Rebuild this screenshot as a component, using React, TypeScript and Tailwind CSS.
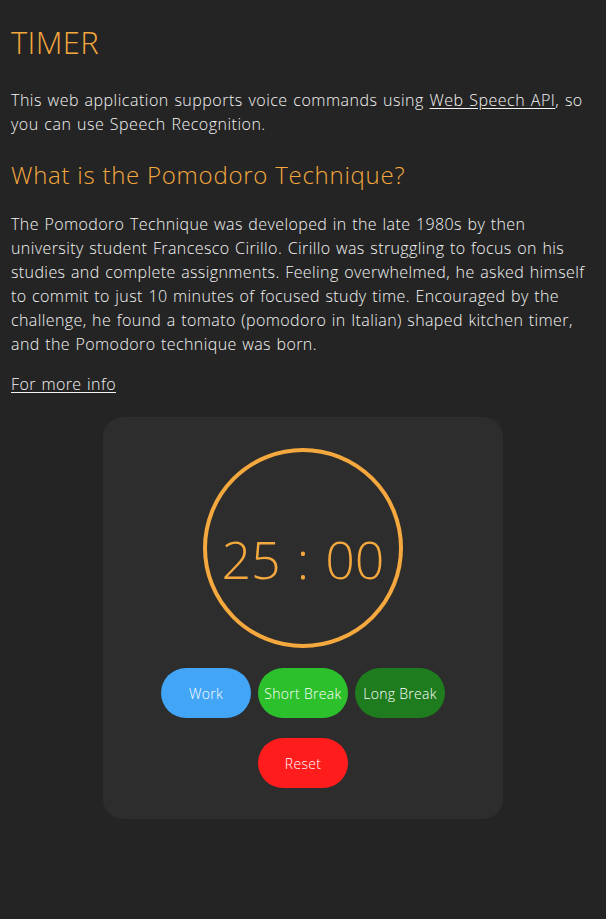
import React from "react";

const font = { fontFamily: '"Open Sans", "Noto Sans", sans-serif' };

export default function App() {
  return (
    <div
      className="min-h-[919px] w-full bg-[#242424] px-[11px] pt-[18px] pb-10 text-[#f4f4f4] font-light"
      style={font}
    >
      <h1 className="text-[31px] leading-[48px] font-light text-[#f4a83e] tracking-[0.3px]">TIMER</h1>
      <p className="mt-[22px] text-[16px] leading-[24px] tracking-[0.5px] [word-spacing:1px]">
        This web application supports voice commands using{" "}
        <a className="underline underline-offset-2">Web Speech API</a>, so you can use Speech Recognition.
      </p>
      <h2 className="mt-[21px] text-[24px] leading-[36px] font-light text-[#f4a83e] tracking-[0.75px]">
        What is the Pomodoro Technique?
      </h2>
      <p className="mt-[19px] text-[16px] leading-[24px] tracking-[0.4px] [word-spacing:1px]">
        The Pomodoro Technique was developed in the late 1980s by then university student Francesco Cirillo.
        Cirillo was struggling to focus on his studies and complete assignments. Feeling overwhelmed, he asked
        himself to commit to just 10 minutes of focused study time. Encouraged by the challenge, he found a
        tomato (pomodoro in Italian) shaped kitchen timer, and the Pomodoro technique was born.
      </p>
      <p className="mt-[16px] text-[16px] leading-[24px] tracking-[0.4px] [word-spacing:1px]">
        <a className="underline underline-offset-2">For more info</a>
      </p>
      <div className="mx-auto mt-[21px] flex w-[400px] flex-col items-center rounded-[20px] bg-[#2d2d2d] pt-[31px] pb-[31px]">
        <div className="flex h-[200px] w-[200px] items-center justify-center rounded-full border-[4px] border-[#f4a83e]">
          <div className="flex items-center gap-[16px] pt-[22px] text-[52px] leading-none font-light text-[#f4a83e]">
            <span>25</span>
            <span>:</span>
            <span>00</span>
          </div>
        </div>
        <div className="mt-[20px] flex gap-[7px]">
          <button className="h-[50px] w-[90px] rounded-full bg-[#42a5f5] text-[14px] tracking-[0.3px] text-white">Work</button>
          <button className="h-[50px] w-[90px] rounded-full bg-[#2cc02c] text-[14px] tracking-[0.3px] text-white">Short Break</button>
          <button className="h-[50px] w-[90px] rounded-full bg-[#1e7b1e] text-[14px] tracking-[0.3px] text-white">Long Break</button>
        </div>
        <button className="mt-[20px] h-[50px] w-[90px] rounded-full bg-[#ff1c1c] text-[14px] tracking-[0.3px] text-white">Reset</button>
      </div>
    </div>
  );
}
